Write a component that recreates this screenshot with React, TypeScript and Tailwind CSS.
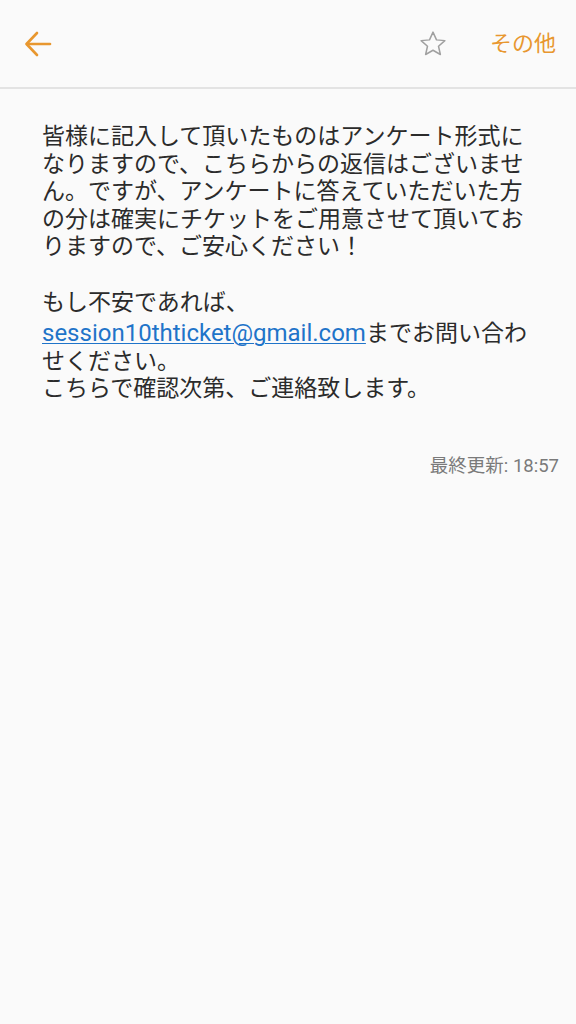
import React from "react";

export default function App() {
  const font = { fontFamily: 'Roboto, "Noto Sans CJK JP", sans-serif' };
  return (
    <div className="w-[576px] h-[1024px] bg-[#fafafa] flex flex-col" style={font}>
      <div className="h-[89px] flex items-center border-b-2 border-[#e3e3e3] shrink-0">
        <div className="pl-[24px] w-[80px] flex items-center">
          <svg width="28" height="28" viewBox="0 0 28 28" fill="none" stroke="#e8972f" strokeWidth="2.6" strokeLinecap="round" strokeLinejoin="round">
            <path d="M26 14H3" />
            <path d="M13 3L2.5 14L13 25" />
          </svg>
        </div>
        <div className="flex-1" />
        <svg width="30" height="30" viewBox="0 0 24 24" fill="none" stroke="#a0a0a0" strokeWidth="1.2" strokeLinejoin="round" className="mr-[42px]">
          <path d="M12 2.5l2.8 6.2 6.7.6-5.1 4.5 1.5 6.6L12 17l-5.9 3.4 1.5-6.6-5.1-4.5 6.7-.6z" />
        </svg>
        <span className="text-[22px] text-[#e8972f] mr-[20px]">その他</span>
      </div>
      <div className="px-[42px] pt-[34px] text-[23px] leading-[27.6px] text-[#2b2b2b]">
        <p>皆様に記入して頂いたものはアンケート形式になりますので、こちらからの返信はございません。ですが、アンケートに答えていただいた方の分は確実にチケットをご用意させて頂いておりますので、ご安心ください！</p>
        <p>&nbsp;</p>
        <p>もし不安であれば、</p>
        <p className="mt-[4px]">
          <span className="text-[24px] text-[#1f74c9] underline decoration-1 underline-offset-2">session10thticket@gmail.com</span>までお問い合わせください。
        </p>
        <p>こちらで確認次第、ご連絡致します。</p>
      </div>
      <div className="flex justify-end pr-[17px] pt-[50px]">
        <span className="text-[18.5px] text-[#7a7a7a]">最終更新: 18:57</span>
      </div>
    </div>
  );
}
